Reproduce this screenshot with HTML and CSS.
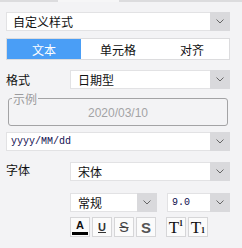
FILE: index.html
```html
<!DOCTYPE html>
<html lang="zh">
<head>
    <meta charset="UTF-8">
    <title>单元格格式</title>
    <link rel="stylesheet" href="styles.css">
</head>
<body>

    <div class="top-strip">
        <span class="seg dark left"></span>
        <span class="seg light"></span>
        <span class="seg dark right"></span>
    </div>

    <div class="panel">
        <div class="select style-select">
            <span class="select-text">自定义样式</span>
            <span class="arrow"><svg width="8" height="5" viewBox="0 0 8 5"><path d="M0.5 0.5 L4 4 L7.5 0.5" fill="none" stroke="#666" stroke-width="1"/></svg></span>
        </div>

        <div class="tabs">
            <div class="tab active">文本</div>
            <div class="tab">单元格</div>
            <div class="tab">对齐</div>
        </div>

        <div class="row format-row">
            <span class="label">格式</span>
            <div class="select grow">
                <span class="select-text">日期型</span>
                <span class="arrow"><svg width="8" height="5" viewBox="0 0 8 5"><path d="M0.5 0.5 L4 4 L7.5 0.5" fill="none" stroke="#666" stroke-width="1"/></svg></span>
            </div>
        </div>

        <fieldset class="sample">
            <legend>示例</legend>
            <div class="sample-value">2020/03/10</div>
        </fieldset>

        <div class="select pattern">
            <span class="select-text mono">yyyy/MM/dd</span>
            <span class="arrow"><svg width="8" height="5" viewBox="0 0 8 5"><path d="M0.5 0.5 L4 4 L7.5 0.5" fill="none" stroke="#666" stroke-width="1"/></svg></span>
        </div>

        <div class="row font-row">
            <span class="label">字体</span>
            <div class="select grow">
                <span class="select-text">宋体</span>
                <span class="arrow"><svg width="8" height="5" viewBox="0 0 8 5"><path d="M0.5 0.5 L4 4 L7.5 0.5" fill="none" stroke="#666" stroke-width="1"/></svg></span>
            </div>
        </div>

        <div class="row indent weight-row">
            <div class="select weight">
                <span class="select-text">常规</span>
                <span class="arrow"><svg width="8" height="5" viewBox="0 0 8 5"><path d="M0.5 0.5 L4 4 L7.5 0.5" fill="none" stroke="#666" stroke-width="1"/></svg></span>
            </div>
            <div class="select size">
                <span class="select-text mono">9.0</span>
                <span class="arrow"><svg width="8" height="5" viewBox="0 0 8 5"><path d="M0.5 0.5 L4 4 L7.5 0.5" fill="none" stroke="#666" stroke-width="1"/></svg></span>
            </div>
        </div>

        <div class="row indent tools">
            <div class="tool-group">
                <button class="tool color-btn"><span class="a-letter">A</span><span class="a-bar"></span></button>
                <button class="tool"><span class="u-letter">U</span></button>
                <button class="tool"><span class="s-strike">S</span></button>
                <button class="tool"><span class="s-bold">S</span></button>
            </div>
            <div class="tool-group">
                <button class="tool"><span class="t-letter">T</span><sup class="t-sup">1</sup></button>
                <button class="tool"><span class="t-letter">T</span><sub class="t-sub">1</sub></button>
            </div>
        </div>
    </div>

</body>
</html>
```

FILE: styles.css
```css
body {
    margin: 0;
    width: 242px;
    height: 248px;
    background: #f3f3f5;
    font-family: "Noto Sans CJK SC", "Noto Sans", sans-serif;
    font-size: 12px;
    color: #111;
    overflow: hidden;
}

.top-strip {
    display: flex;
    height: 2px;
}

.seg.dark {
    background: #dcdcde;
}

.seg.left {
    width: 58px;
}

.seg.light {
    width: 61px;
    background: #f6f6f7;
}

.seg.right {
    flex: 1;
}

.panel {
    display: flex;
    flex-direction: column;
    width: 224px;
    padding-left: 6px;
}

.select {
    display: flex;
    align-items: stretch;
    height: 19px;
    box-sizing: border-box;
    background: #fff;
    border: 1px solid #e2e2e4;
    border-right: none;
}

.select-text {
    flex: 1;
    display: flex;
    align-items: center;
    padding-left: 6px;
    line-height: 1;
}

.arrow {
    width: 20px;
    display: flex;
    align-items: center;
    justify-content: center;
    background: #d9d9dc;
    margin-top: -1px;
    margin-bottom: -1px;
}

.style-select {
    margin-top: 10px;
}

.tabs {
    display: flex;
    margin-top: 7px;
    height: 22px;
    box-sizing: border-box;
    border: 1px solid #dcdcde;
    background: #fff;
}

.tab {
    flex: 1;
    display: flex;
    align-items: center;
    justify-content: center;
}

.tab.active {
    background: #4a9ef6;
    color: #fff;
}

.row {
    display: flex;
    align-items: center;
}

.label {
    width: 64px;
    line-height: 1;
}

.grow {
    flex: 1;
}

.grow .select-text {
    padding-left: 7px;
}

.format-row {
    margin-top: 10px;
}

.sample {
    margin: 4px 2px 0 2px;
    padding: 0;
    height: 33px;
    box-sizing: border-box;
    border: 1px solid #a3a3a5;
    border-radius: 3px;
}

.sample legend {
    margin-left: 3px;
    padding: 0 1px;
    color: #9b9b9d;
    font-size: 12px;
    line-height: 11px;
}

.sample-value {
    text-align: center;
    font-family: "Liberation Sans", Arial, sans-serif;
    font-size: 12px;
    color: #a3a3a5;
    line-height: 14px;
    margin-top: 2px;
}

.pattern {
    margin-top: 6px;
}

.mono {
    font-family: "Liberation Mono", "Courier New", monospace;
    font-size: 10px;
    color: #101050;
    padding-left: 4px;
}

.font-row {
    margin-top: 11px;
}

.font-row .label {
    margin-top: -3px;
}

.indent {
    padding-left: 64px;
}

.weight-row {
    margin-top: 12px;
    gap: 10px;
}

.weight {
    width: 87px;
}

.weight .select-text {
    padding-left: 7px;
}

.size {
    flex: 1;
}

.tools {
    margin-top: 5px;
    gap: 10px;
}

.tool-group {
    display: flex;
    gap: 2px;
}

.tool {
    position: relative;
    width: 20px;
    height: 20px;
    padding: 0;
    box-sizing: border-box;
    border: 1px solid #d6d6d8;
    background: #fbfbfb;
    display: flex;
    flex-direction: column;
    align-items: center;
    justify-content: center;
    font-family: "Liberation Sans", Arial, sans-serif;
    color: #111;
}

.color-btn {
    justify-content: flex-start;
}

.a-letter {
    font-weight: bold;
    font-size: 11px;
    line-height: 11px;
    margin-top: 2px;
}

.a-bar {
    width: 16px;
    height: 3px;
    background: #000;
    margin-top: 1px;
}

.u-letter {
    font-weight: bold;
    font-size: 11px;
    line-height: 11px;
    text-decoration: underline;
    color: #333;
}

.s-strike {
    font-size: 14px;
    line-height: 14px;
    text-decoration: line-through;
    color: #444;
}

.s-bold {
    font-weight: bold;
    font-size: 15px;
    line-height: 15px;
    color: #555;
}

.tool:nth-child(n) .t-letter {
    font-family: "Liberation Serif", "Times New Roman", serif;
    font-size: 17px;
    line-height: 17px;
}

.tool .t-sup,
.tool .t-sub {
    position: absolute;
    right: 2px;
    font-family: "Liberation Serif", serif;
    font-size: 8px;
    line-height: 8px;
    font-weight: bold;
}

.t-sup {
    top: 2px;
}

.t-sub {
    bottom: 1px;
}

.tool:has(.t-letter) .t-letter {
    margin-right: 4px;
}
```
